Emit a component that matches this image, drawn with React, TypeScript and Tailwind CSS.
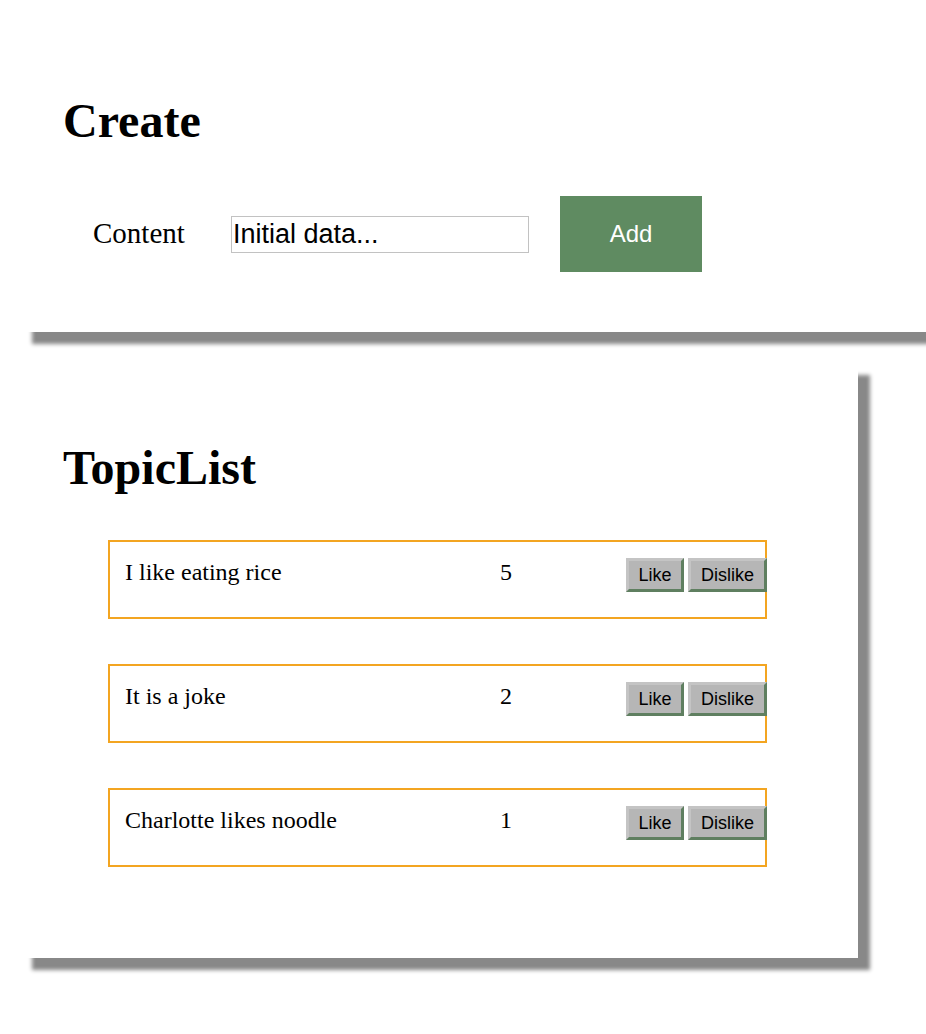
import { useState } from 'react'

type Topic = {
    id: number
    content: string
    votes: number
}

const initialTopics: Topic[] = [
    { id: 1, content: 'I like eating rice', votes: 5 },
    { id: 2, content: 'It is a joke', votes: 2 },
    { id: 3, content: 'Charlotte likes noodle', votes: 1 },
]

const serif = "font-['Liberation_Serif','Times_New_Roman',serif]"
const sans = "font-['Liberation_Sans',Arial,sans-serif]"

const VoteButton = ({ label, onClick, className }: { label: string; onClick: () => void; className?: string }) => (
    <button
        onClick={onClick}
        className={`${sans} h-[34px] bg-[#b6b6b6] text-[18px] text-black border-[3px] border-t-[#c4c4c4] border-l-[#c4c4c4] border-r-[#5f7f60] border-b-[#5f7f60] leading-none cursor-pointer ${className ?? ''}`}
    >
        {label}
    </button>
)

const TopicItem = ({ topic, onVote }: { topic: Topic; onVote: (id: number, delta: number) => void }) => (
    <div className="ml-[45px] w-[659px] h-[79px] border-2 border-[#f3a521] pl-[15px] pt-[16px] flex items-start">
        <div className={`${serif} w-[375px] pt-[1px] text-[24px] leading-[27px] text-black`}>{topic.content}</div>
        <div className={`${serif} w-[126px] pt-[1px] text-[24px] leading-[27px] text-black`}>{topic.votes}</div>
        <div className="flex gap-[4px] mr-[-2px]">
            <VoteButton label="Like" onClick={() => onVote(topic.id, 1)} className="w-[58px]" />
            <VoteButton label="Dislike" onClick={() => onVote(topic.id, -1)} className="w-[79px]" />
        </div>
    </div>
)

const App = () => {
    const [topics, setTopics] = useState<Topic[]>(initialTopics)
    const [content, setContent] = useState('Initial data...')

    const handleAdd = () => {
        if (!content.trim()) return
        setTopics([...topics, { id: Date.now(), content, votes: 0 }])
        setContent('')
    }

    const handleVote = (id: number, delta: number) => {
        setTopics(topics.map((t) => (t.id === id ? { ...t, votes: t.votes + delta } : t)))
    }

    return (
        <div className="min-h-[1034px] w-[926px] bg-white overflow-hidden pt-[20px]">
            <div className="ml-[20px] w-[940px] h-[312px] bg-white shadow-[12px_12px_4px_#888888] pl-[43px] pt-[77px]">
                <h1 className={`${serif} text-[48px] font-bold leading-none text-black`}>Create</h1>
                <div className="mt-[51px] ml-[30px] flex items-center">
                    <label className={`${serif} text-[29px] text-black w-[138px]`}>Content</label>
                    <input
                        value={content}
                        onChange={(e) => setContent(e.target.value)}
                        className={`${sans} w-[298px] h-[37px] border border-[#c2c2c2] px-[1px] text-[27px] text-black outline-none`}
                    />
                    <button
                        onClick={handleAdd}
                        className={`${sans} ml-[31px] w-[142px] h-[76px] bg-[#5f8b61] text-white text-[24px] font-medium cursor-pointer`}
                    >
                        Add
                    </button>
                </div>
            </div>

            <div className="mt-[31px] ml-[20px] w-[838px] h-[595px] bg-white shadow-[12px_12px_4px_#888888] pl-[43px] pt-[81px]">
                <h1 className={`${serif} text-[48px] font-bold leading-none text-black`}>TopicList</h1>
                <div className="mt-[48px] flex flex-col gap-[45px]">
                    {topics.map((topic) => (
                        <TopicItem key={topic.id} topic={topic} onVote={handleVote} />
                    ))}
                </div>
            </div>
        </div>
    )
}

export default App
